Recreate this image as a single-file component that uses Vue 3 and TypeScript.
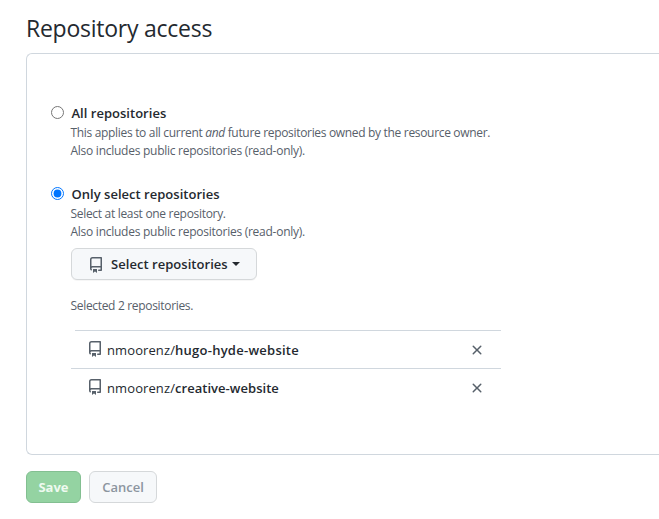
<script setup lang="ts">
import { ref } from 'vue'

interface Repo {
  owner: string
  name: string
}

const access = ref<'all' | 'selected'>('selected')
const repos = ref<Repo[]>([
  { owner: 'nmoorenz', name: 'hugo-hyde-website' },
  { owner: 'nmoorenz', name: 'creative-website' },
])

const repoIcon =
  'M2 2.5A2.5 2.5 0 014.5 0h8.75a.75.75 0 01.75.75v12.5a.75.75 0 01-.75.75h-2.5a.75.75 0 110-1.5h1.75v-2h-8a1 1 0 00-.714 1.7.75.75 0 01-1.072 1.05A2.495 2.495 0 012 11.5v-9zm10.5-1V9h-8c-.356 0-.694.074-1 .208V2.5a1 1 0 011-1h8zM5 12.25v3.25a.25.25 0 00.4.2l1.45-1.087a.25.25 0 01.3 0L8.6 15.7a.25.25 0 00.4-.2v-3.25a.25.25 0 00-.25-.25h-3.5a.25.25 0 00-.25.25z'
const closeIcon =
  'M3.72 3.72a.75.75 0 011.06 0L8 6.94l3.22-3.22a.75.75 0 111.06 1.06L9.06 8l3.22 3.22a.75.75 0 11-1.06 1.06L8 9.06l-3.22 3.22a.75.75 0 01-1.06-1.06L6.94 8 3.72 4.78a.75.75 0 010-1.06z'

function remove(repo: Repo) {
  repos.value = repos.value.filter((r) => r !== repo)
}
</script>

<template>
  <main class="page">
    <h2 class="title">Repository access</h2>
    <section class="box">
      <label class="option">
        <input v-model="access" class="radio" type="radio" value="all" />
        <span class="label">All repositories</span>
      </label>
      <p class="note">
        This applies to all current <em>and</em> future repositories owned by the resource owner.<br />
        <span class="also">Also includes public repositories (read-only).</span>
      </p>

      <label class="option second">
        <input v-model="access" class="radio" type="radio" value="selected" />
        <span class="label">Only select repositories</span>
      </label>
      <p class="note">
        <span class="least">Select at least one repository.</span><br />
        <span class="also">Also includes public repositories (read-only).</span>
      </p>

      <button class="btn select" type="button">
        <svg class="icon" viewBox="0 0 16 16" width="16" height="16"><path fill-rule="evenodd" :d="repoIcon" /></svg>
        <span class="select-text">Select repositories</span>
        <span class="caret"></span>
      </button>
      <p class="count">Selected {{ repos.length }} repositories.</p>

      <ul class="list">
        <li v-for="repo in repos" :key="repo.name" class="row">
          <svg class="icon repo-icon" viewBox="0 0 16 16" width="16" height="16"><path fill-rule="evenodd" :d="repoIcon" /></svg>
          <span class="repo"><span class="owner">{{ repo.owner }}/</span><strong>{{ repo.name }}</strong></span>
          <button class="close" type="button" aria-label="Remove" @click="remove(repo)">
            <svg class="icon" viewBox="0 0 16 16" width="16" height="16"><path fill-rule="evenodd" :d="closeIcon" /></svg>
          </button>
        </li>
      </ul>
    </section>
    <div class="actions">
      <button class="btn save" type="button" disabled>Save</button>
      <button class="btn cancel" type="button">Cancel</button>
    </div>
  </main>
</template>

<style>
html,
body {
  margin: 0;
  background: #fff;
  overflow: hidden;
}
</style>

<style scoped>
.page {
  box-sizing: border-box;
  width: 659px;
  height: 519px;
  padding: 11px 0 0 26px;
  overflow: hidden;
  color: #24292f;
  font-family: 'Open Sans', 'Noto Sans', sans-serif;
  font-size: 13px;
  white-space: nowrap;
}
.title {
  margin: 0 0 7px;
  height: 35px;
  font-size: 23px;
  line-height: 35px;
  font-weight: 400;
  letter-spacing: -0.25px;
}
.box {
  box-sizing: border-box;
  height: 402px;
  padding: 49px 0 0 24px;
  border: 1px solid #d0d7de;
  border-right: 0;
  border-radius: 6px 0 0 6px;
}
.option {
  display: flex;
  align-items: center;
  height: 21px;
}
.option.second {
  margin-top: 24px;
}
.radio {
  box-sizing: border-box;
  width: 13px;
  height: 13px;
  margin: 0 7.5px 2px 0;
}
.label {
  margin-bottom: 2px;
  font-weight: 600;
  letter-spacing: 0.02px;
}
.note {
  margin: 0 0 0 19.5px;
  color: #57606a;
  font-size: 12px;
  line-height: 18px;
  letter-spacing: -0.322px;
}
.also {
  letter-spacing: -0.26px;
}
.least {
  letter-spacing: -0.31px;
}
.btn {
  box-sizing: border-box;
  display: flex;
  align-items: center;
  height: 32px;
  border: 1px solid #d5d8da;
  border-radius: 6px;
  background: #f6f8fa;
  color: #24292f;
  font: inherit;
  font-weight: 600;
  box-shadow: 0 1px 0 rgba(27, 31, 36, 0.04);
}
.icon {
  display: block;
  flex: none;
  fill: #57606a;
}
.select {
  width: 186px;
  margin: 7px 0 0 20px;
  padding: 0 0 0 16px;
}
.select .icon {
  margin-top: 1px;
}
.select-text {
  margin-left: 7px;
  letter-spacing: 0.04px;
}
.caret {
  margin-left: 4px;
  border: 4px solid transparent;
  border-top-color: #24292f;
  border-bottom: 0;
}
.count {
  margin: 17px 0 0 19.5px;
  color: #57606a;
  font-size: 12px;
  line-height: 18px;
  letter-spacing: -0.32px;
}
.list {
  width: 430px;
  margin: 15px 0 0 20px;
  padding: 0;
  list-style: none;
}
.row {
  box-sizing: border-box;
  display: flex;
  align-items: center;
  height: 38px;
  padding-left: 16px;
  border-top: 1px solid #d0d7de;
}
.row:first-child {
  margin-left: 4px;
  padding-left: 12px;
}
.repo-icon {
  margin-bottom: 2px;
}
.repo {
  margin-left: 4px;
}
.owner {
  letter-spacing: 0.1px;
}
.repo strong {
  font-weight: 600;
  letter-spacing: 0.04px;
}
.row:first-child strong {
  letter-spacing: 0.26px;
}
.close {
  margin: 0 16px 0 auto;
  padding: 0;
  border: 0;
  background: none;
}
.actions {
  display: flex;
  gap: 8px;
  margin-top: 16px;
}
.save,
.cancel {
  justify-content: center;
  padding: 0;
}
.save {
  width: 55px;
  border-color: #83bf91;
  background: #94d3a2;
  color: #eefaf0;
  font-weight: 700;
  box-shadow: none;
}
.cancel {
  width: 68px;
  color: #8c959f;
  box-shadow: none;
}
</style>
